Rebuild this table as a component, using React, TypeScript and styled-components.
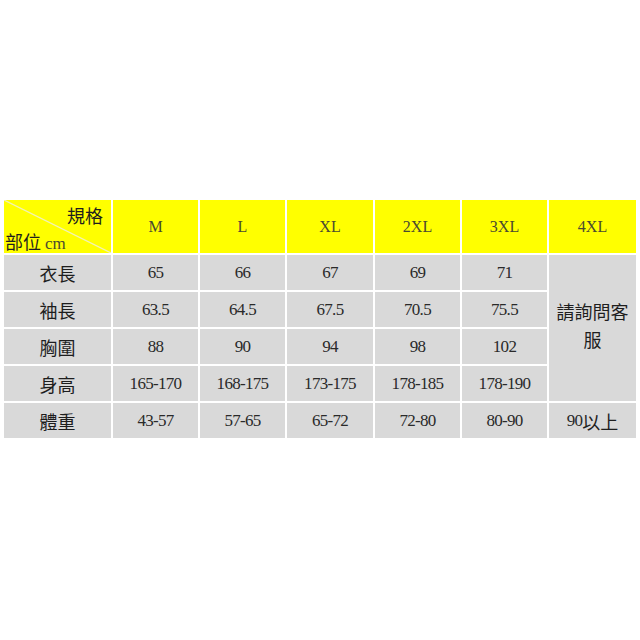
import React from 'react'
import styled, { createGlobalStyle } from 'styled-components';

const GlobalStyle = createGlobalStyle`
  html, body {
    margin: 0;
    padding: 0;
    background: #fff;
  }
`;

const Page = styled.div`
  width: 640px;
  height: 640px;
  padding: 200px 4px 0 4px;
  box-sizing: border-box;
  background: #fff;
`;

const Table = styled.div`
  display: grid;
  grid-template-columns: 107px 85px 85px 86px 85px 85px 87px;
  grid-template-rows: 53px 35px 35px 35px 35px 35px;
  gap: 2px;
  background: #fff;
  width: 632px;
`;

const Cell = styled.div<{ $head?: boolean }>`
  display: flex;
  align-items: center;
  justify-content: center;
  background: ${p => p.$head ? '#ffff00' : '#d9d9d9'};
  color: ${p => p.$head ? '#4a4a30' : '#2a2a2a'};
  font-family: "Liberation Serif", "Noto Sans CJK TC", serif;
  font-size: ${p => p.$head ? 16 : 17}px;
  letter-spacing: ${p => p.$head ? 0 : -0.7}px;
`;

const LabelCell = styled(Cell)`
  font-family: "Noto Sans CJK TC", sans-serif;
  font-size: 18px;
  letter-spacing: 0;
  color: #1e1e1e;
`;

const Digits = styled.span`
  font-family: "Liberation Serif", serif;
  font-size: 17px;
  letter-spacing: -0.7px;
  color: #2a2a2a;
`;

const MergedCell = styled(LabelCell)`
  grid-column: 7;
  grid-row: 2 / span 4;
  text-align: center;
  line-height: 28px;
  padding: 0 4px 6px;
`;

const Corner = styled.div`
  position: relative;
  background: #ffff00;
  color: #1e1e1e;
  font-family: "Noto Sans CJK TC", sans-serif;
  font-size: 18px;
  overflow: hidden;
`;

const Slash = styled.svg`
  position: absolute;
  inset: 0;
`;

const CornerTop = styled.div`
  position: absolute;
  right: 8px;
  top: 2px;
`;

const CornerBottom = styled.div`
  position: absolute;
  left: 1px;
  bottom: -1px;

  span {
    font-family: "Liberation Serif", serif;
    font-size: 17px;
    color: #4a4a30;
  }
`;

const sizes = ['M', 'L', 'XL', '2XL', '3XL', '4XL'];

const rows = [
  { label: '衣長', values: ['65', '66', '67', '69', '71'] },
  { label: '袖長', values: ['63.5', '64.5', '67.5', '70.5', '75.5'] },
  { label: '胸圍', values: ['88', '90', '94', '98', '102'] },
  { label: '身高', values: ['165-170', '168-175', '173-175', '178-185', '178-190'] },
];

const weights = ['43-57', '57-65', '65-72', '72-80', '80-90'];

export default function App() {
  return (
    <Page>
      <GlobalStyle />
      <Table>
        <Corner>
          <Slash width="107" height="53" viewBox="0 0 107 53">
            <line x1="0" y1="0" x2="107" y2="53" stroke="#f2f2b8" strokeWidth="1.2" />
          </Slash>
          <CornerTop>規格</CornerTop>
          <CornerBottom>部位 <span>cm</span></CornerBottom>
        </Corner>
        {sizes.map(s => <Cell $head key={s}>{s}</Cell>)}

        {rows.map((r, i) => (
          <React.Fragment key={r.label}>
            <LabelCell>{r.label}</LabelCell>
            {r.values.map((v, j) => <Cell key={j}>{v}</Cell>)}
            {i === 0 && <MergedCell>請詢問客服</MergedCell>}
          </React.Fragment>
        ))}

        <LabelCell>體重</LabelCell>
        {weights.map(w => <Cell key={w}>{w}</Cell>)}
        <LabelCell><Digits>90</Digits>以上</LabelCell>
      </Table>
    </Page>
  );
}
